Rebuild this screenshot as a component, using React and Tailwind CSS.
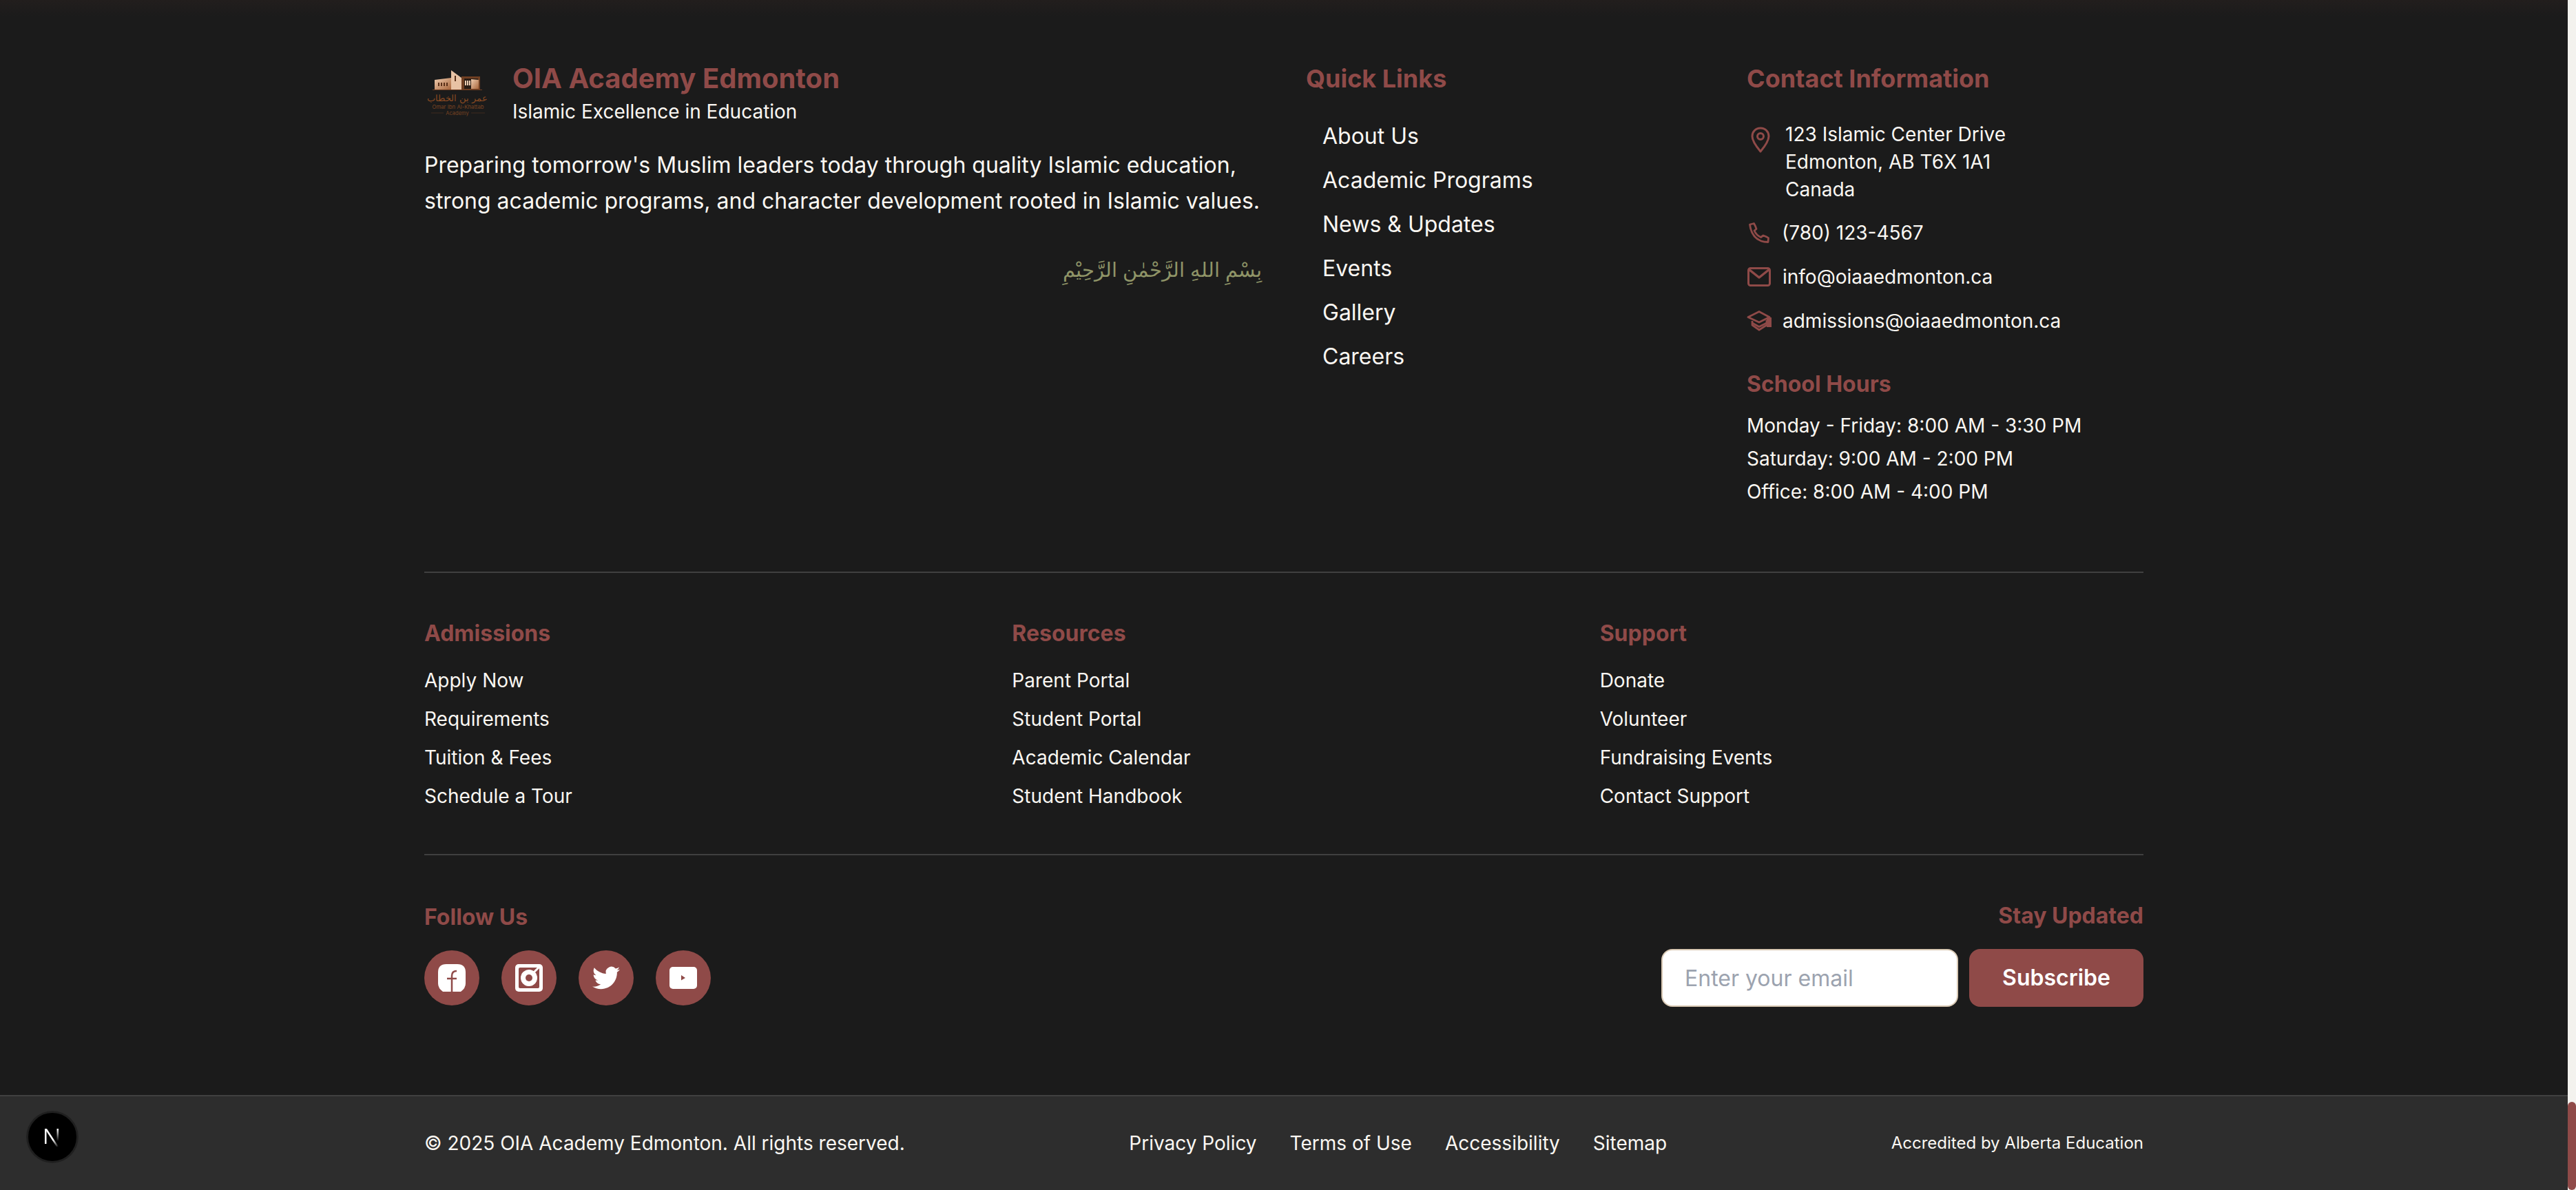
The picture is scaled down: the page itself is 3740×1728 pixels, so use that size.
const heading = "font-bold text-[#8f4a48]";

function Logo() {
  return (
    <svg viewBox="0 0 96 96" className="w-[96px] h-[96px] shrink-0">
      <defs>
        <linearGradient id="bld" x1="0" y1="0" x2="1" y2="1">
          <stop offset="0" stopColor="#f0cdb0" />
          <stop offset="1" stopColor="#a8663c" />
        </linearGradient>
      </defs>
      <path d="M15 30 L39 27 V44 H15 Z" fill="url(#bld)" />
      <path d="M39 16 L54 27 V44 H39 Z" fill="#e8c2a4" />
      <path d="M54 25 H81 V44 H54 Z" fill="#6f3f22" />
      <path d="M58 28 H78 V43 H58 Z" fill="#2a1d15" />
      <path d="M68 29 L79 30 V43 H68 Z" fill="url(#bld)" />
      <path d="M12 44 H84 V45 H12 Z" fill="#6d3d22" />
      <g fill="#5a3018">
        <rect x="20" y="34" width="2" height="5" />
        <rect x="24" y="34" width="2" height="5" />
        <rect x="28" y="34" width="2" height="5" />
        <rect x="32" y="34" width="2" height="5" />
        <rect x="44" y="24" width="2" height="8" />
      </g>
      <g fill="#eccdb2">
        <rect x="59" y="31" width="2" height="7" />
        <rect x="62" y="31" width="2" height="7" />
        <rect x="65" y="31" width="2" height="7" />
      </g>
      <text x="48" y="61" textAnchor="middle" fontSize="13" fill="#8a4a22">عمر بن الخطاب</text>
      <text x="49" y="72" textAnchor="middle" fontSize="7.800" fill="#7a4322" fontFamily="Inter, sans-serif">Omar Ibn Al-Khattab</text>
      <text x="48" y="81" textAnchor="middle" fontSize="7.500" fill="#7a4322" fontFamily="Inter, sans-serif">Academy</text>
      <path d="M10 78 H28 M68 78 H88" stroke="#4a3020" strokeWidth="0.8" />
    </svg>
  );
}

function PinIcon() {
  return (
    <svg viewBox="0 0 28 38" className="w-[28px] h-[38px] shrink-0" fill="none" stroke="#8f4a48" strokeWidth="3">
      <path d="M14 2 C6.800 2 2 7.500 2 14 C2 21 9 30 14 36 C19 30 26 21 26 14 C26 7.500 21.200 2 14 2 Z" strokeLinejoin="round" />
      <circle cx="14" cy="14" r="4.500" />
    </svg>
  );
}

function PhoneIcon() {
  return (
    <svg viewBox="0 0 30 30" className="w-[30px] h-[30px] shrink-0" fill="none" stroke="#8f4a48" strokeWidth="2.800" strokeLinejoin="round" strokeLinecap="round">
      <path d="M1.500 3 L7.500 1.500 C9 4 10.500 7 11 9.500 L8 12 C10 16.500 13 19.500 17.500 21.500 L21 19 C24 20 26.500 21 28.500 22.500 L28 28.500 C26 28.500 22 28.500 18 27 C9 23.500 3 15 1.500 3 Z" />
    </svg>
  );
}

function MailIcon() {
  return (
    <svg viewBox="0 0 34 28" className="w-[34px] h-[28px] shrink-0" fill="none" stroke="#8f4a48" strokeWidth="3" strokeLinejoin="round">
      <rect x="1.500" y="1.500" width="31" height="25" rx="3" />
      <path d="M2 3 L17 15 L32 3" strokeWidth="3.500" />
    </svg>
  );
}

function CapIcon() {
  return (
    <svg viewBox="0 0 36 30" className="w-[36px] h-[30px] shrink-0" fill="none" stroke="#8f4a48" strokeWidth="2.800" strokeLinejoin="round">
      <path d="M18 1.500 L33 9.500 L18 17 L2 9.500 Z" />
      <path d="M8 15 V21 L18 28 L29 21 V14" />
      <path d="M8 18 L18 23.500 L29 18" />
      <rect x="29" y="10" width="7" height="14" fill="#8f4a48" stroke="none" />
    </svg>
  );
}

function Facebook() {
  return (
    <svg viewBox="0 0 40 40" className="w-[40px] h-[40px]">
      <path d="M12 0 H28 Q40 0 40 12 V28 Q40 35 33 40 H7 Q0 35 0 28 V12 Q0 0 12 0 Z" fill="#fff" />
      <path d="M20 40 V17 Q20 10 27 10 M13 21 H27" stroke="#8f4a48" strokeWidth="2.500" fill="none" />
    </svg>
  );
}

function Instagram() {
  return (
    <svg viewBox="0 0 40 40" className="w-[40px] h-[40px]">
      <rect width="40" height="40" rx="5" fill="#fff" />
      <rect x="5" y="5" width="30" height="30" rx="2" fill="#8f4a48" />
      <circle cx="20" cy="20" r="12" fill="#fff" />
      <circle cx="20" cy="20" r="5" fill="#8f4a48" />
      <path d="M27 12 L36 3" stroke="#fff" strokeWidth="3" />
    </svg>
  );
}

function Twitter() {
  return (
    <svg viewBox="0 0 24 24" className="w-[40px] h-[40px]" fill="#fff">
      <path d="M24 4.600c-.9.4-1.800.7-2.800.8 1-.6 1.800-1.600 2.200-2.700-1 .6-2 1-3.100 1.200A4.900 4.900 0 0 0 11.900 8.400C7.800 8.200 4.100 6.200 1.700 3.200.4 5.400 1 8.300 3.200 9.700c-.8 0-1.600-.2-2.200-.6 0 2.300 1.600 4.400 3.900 4.900-.7.2-1.500.2-2.200.1.600 2 2.400 3.400 4.600 3.400A9.900 9.900 0 0 1 0 19.500 13.900 13.900 0 0 0 7.500 21.700c9.100 0 14.300-7.700 14-14.600 1-.7 1.800-1.500 2.500-2.500z" />
    </svg>
  );
}

function Youtube() {
  return (
    <svg viewBox="0 0 40 40" className="w-[40px] h-[40px]">
      <rect x="0" y="4" width="40" height="32" rx="5" fill="#fff" />
      <path d="M17 16 L23 20 L17 23.500 Z" fill="#8f4a48" />
    </svg>
  );
}

function NextBadge() {
  return (
    <div className="absolute left-[39px] top-[1614px] w-[74px] h-[74px] rounded-full bg-black border-[2px] border-[#1f1f1f] shadow-[0_0_0_1px_#222] flex items-center justify-center">
      <svg viewBox="0 0 32 32" className="w-[32px] h-[32px]">
        <defs>
          <linearGradient id="nd" x1="0" y1="0" x2="1" y2="1">
            <stop offset="0.6" stopColor="#fff" />
            <stop offset="1" stopColor="#fff" stopOpacity="0" />
          </linearGradient>
          <linearGradient id="nv" x1="0" y1="0" x2="0" y2="1">
            <stop offset="0" stopColor="#fff" />
            <stop offset="1" stopColor="#fff" stopOpacity="0" />
          </linearGradient>
        </defs>
        <rect x="5" y="4" width="2.500" height="22" fill="#fff" />
        <path d="M5 4 H8 L25 30 H22 Z" fill="url(#nd)" />
        <rect x="22.500" y="4" width="2.500" height="18" fill="url(#nv)" />
      </svg>
    </div>
  );
}

const quickLinks = ['About Us', 'Academic Programs', 'News & Updates', 'Events', 'Gallery', 'Careers'];
const linkColumns = [
  { title: 'Admissions', links: ['Apply Now', 'Requirements', 'Tuition & Fees', 'Schedule a Tour'] },
  { title: 'Resources', links: ['Parent Portal', 'Student Portal', 'Academic Calendar', 'Student Handbook'] },
  { title: 'Support', links: ['Donate', 'Volunteer', 'Fundraising Events', 'Contact Support'] },
];
const socials = [Facebook, Instagram, Twitter, Youtube];

export default function App() {
  return (
    <div className="relative flex h-[1728px] overflow-hidden font-['Inter',sans-serif] text-[#faf7f2]">
      <div className="flex-1 flex flex-col bg-[#1b1b1b]">
        {/* Top sections */}
        <div className="flex-1 w-[2496px] mx-auto pt-[86px]">
          <div className="grid grid-cols-4 gap-x-[64px] h-[744px]">
            {/* Brand */}
            <div className="col-span-2">
              <div className="flex items-center gap-[32px]">
                <Logo />
                <div>
                  <h3 className={`text-[40px] leading-[56px] ${heading}`}>OIA Academy Edmonton</h3>
                  <p className="text-[28px] leading-[40px]">Islamic Excellence in Education</p>
                </div>
              </div>
              <p className="mt-[32px] text-[32px] leading-[52px]">
                Preparing tomorrow's Muslim leaders today through quality Islamic education, strong academic programs, and character development rooted in Islamic values.
              </p>
              <p dir="rtl" className="mt-[46px] text-[29px] leading-[56px] text-[#8f9467]">
                بِسْمِ اللهِ الرَّحْمٰنِ الرَّحِيْمِ
              </p>
            </div>

            {/* Quick links */}
            <div>
              <h3 className={`text-[36px] leading-[56px] ${heading}`}>Quick Links</h3>
              <ul className="mt-[24px]">
                {quickLinks.map((l) => (
                  <li key={l} className="h-[64px] px-[24px] flex items-center text-[32px]">{l}</li>
                ))}
              </ul>
            </div>

            {/* Contact */}
            <div>
              <h3 className={`text-[36px] leading-[56px] ${heading}`}>Contact Information</h3>
              <div className="mt-[33px] text-[28px]">
                <div className="flex pl-[6px] gap-[22px] leading-[40px]">
                  <div className="shrink-0 mt-[9px]"><PinIcon /></div>
                  <div>123 Islamic Center Drive<br />Edmonton, AB T6X 1A1<br />Canada</div>
                </div>
                <div className="flex items-center h-[64px] mt-[11px] gap-[18px] pl-[3px]"><PhoneIcon />(780) 123-4567</div>
                <div className="flex items-center h-[64px] gap-[17px] pl-[1px]"><MailIcon />info@oiaaedmonton.ca</div>
                <div className="flex items-center h-[64px] gap-[16px]"><CapIcon />admissions@oiaaedmonton.ca</div>
              </div>
              <h4 className={`mt-[36px] text-[32px] leading-[48px] ${heading}`}>School Hours</h4>
              <div className="mt-[12px] text-[28px] leading-[48px]">
                <p>Monday - Friday: 8:00 AM - 3:30 PM</p>
                <p>Saturday: 9:00 AM - 2:00 PM</p>
                <p>Office: 8:00 AM - 4:00 PM</p>
              </div>
            </div>
          </div>

          {/* Link columns */}
          <div className="border-t-2 border-[#404040] pt-[64px] h-[410px]">
            <div className="grid grid-cols-3 gap-x-[64px]">
              {linkColumns.map((c) => (
                <div key={c.title}>
                  <h4 className={`text-[32px] leading-[48px] ${heading}`}>{c.title}</h4>
                  <ul className="mt-[16px]">
                    {c.links.map((l) => (
                      <li key={l} className="h-[56px] flex items-center text-[28px]">{l}</li>
                    ))}
                  </ul>
                </div>
              ))}
            </div>
          </div>

          {/* Social and newsletter */}
          <div className="border-t-2 border-[#404040] pt-[66px] flex justify-between">
            <div>
              <h4 className={`text-[32px] leading-[48px] ${heading}`}>Follow Us</h4>
              <div className="mt-[24px] flex gap-[32px]">
                {socials.map((Icon, i) => (
                  <a key={i} className="w-[80px] h-[80px] rounded-full bg-[#8f4a48] flex items-center justify-center"><Icon /></a>
                ))}
              </div>
            </div>
            <div className="flex flex-col items-end">
              <h4 className={`-mt-[2px] text-[32px] leading-[48px] ${heading}`}>Stay Updated</h4>
              <div className="mt-[24px] flex gap-[16px]">
                <input placeholder="Enter your email" className="w-[431px] h-[84px] px-[32px] text-[32px] rounded-[16px] bg-white border-2 border-[#d9c9b4] placeholder:text-[#9ca3af] text-black outline-none" />
                <button className="w-[253px] h-[84px] rounded-[16px] bg-[#8f4a48] text-white text-[32px] font-semibold">Subscribe</button>
              </div>
            </div>
          </div>
        </div>

        {/* Bottom bar */}
        <div className="h-[138px] border-t-2 border-[#404040] bg-[#2d2d2d]">
          <div className="w-[2496px] mx-auto h-full flex items-center justify-between">
            <p className="text-[28px]">© 2025 OIA Academy Edmonton. All rights reserved.</p>
            <div className="flex gap-[48px] text-[28px]">
              <a>Privacy Policy</a>
              <a>Terms of Use</a>
              <a>Accessibility</a>
              <a>Sitemap</a>
            </div>
            <p className="text-[24px]">Accredited by Alberta Education</p>
          </div>
        </div>
      </div>

      {/* Scrollbar */}
      <div className="w-[12px] bg-[#f3f2ee] flex flex-col justify-end">
        <div className="h-[128px] rounded-full bg-[#8f4a48]" />
      </div>

      {/* Faint shadow from the section above */}
      <div className="absolute top-0 left-0 right-[12px] h-[24px] bg-gradient-to-b from-[#221e1d] to-transparent" />

      <NextBadge />
    </div>
  );
}
